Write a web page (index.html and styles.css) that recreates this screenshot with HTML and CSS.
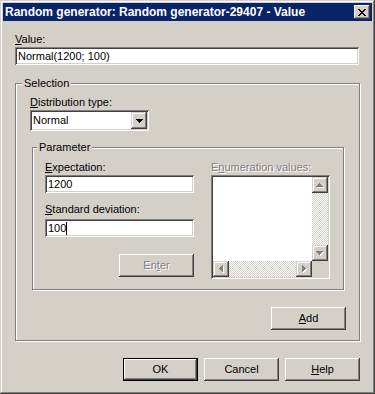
FILE: index.html
```html
<!DOCTYPE html>
<html lang="en">
<head>
    <meta charset="utf-8">
    <title>Random generator: Random generator-29407 - Value</title>
    <link rel="stylesheet" href="styles.css">
</head>
<body>
<div class="window">
    <div class="titlebar">
        <span class="title">Random generator: Random generator-29407 - Value</span>
        <span class="close">
            <svg width="8" height="7" viewBox="0 0 8 7"><path fill="#000" d="M0 0h2v1h-2z M6 0h2v1h-2z M1 1h2v1h-2z M5 1h2v1h-2z M2 2h4v1h-4z M3 3h2v1h-2z M2 4h4v1h-4z M1 5h2v1h-2z M5 5h2v1h-2z M0 6h2v1h-2z M6 6h2v1h-2z"/></svg>
        </span>
    </div>

    <div class="content">
        <div class="label"><u>V</u>alue:</div>
        <div class="edit value-edit">Normal(1200; 100)</div>

        <!-- group box: Selection -->
        <div class="group selection">
            <span class="legend">Selection</span>
            <div class="label"><u>D</u>istribution type:</div>
            <div class="combo">
                <span class="combo-text">Normal</span>
                <span class="combo-btn">
                    <svg width="7" height="4" viewBox="0 0 7 4"><path fill="#000" d="M0 0h7v1h-7z M1 1h5v1h-5z M2 2h3v1h-3z M3 3h1v1h-1z"/></svg>
                </span>
            </div>

            <!-- group box: Parameter -->
            <div class="group parameter">
                <span class="legend">Parameter</span>
                <div class="param-row">
                    <div class="param-left">
                        <div class="label"><u>E</u>xpectation:</div>
                        <div class="edit">1200</div>
                        <div class="label std-label"><u>S</u>tandard deviation:</div>
                        <div class="edit">100<span class="caret"></span></div>
                        <div class="btn disabled enter-btn">En<u>t</u>er</div>
                    </div>
                    <div class="param-right">
                        <div class="label disabled"><span>E<u>n</u>umeration values:</span></div>
                        <div class="listbox">
                            <div class="list-area"></div>
                            <div class="vscroll">
                                <span class="sbtn">
                                    <svg width="8" height="5" viewBox="0 0 8 5"><path fill="#fff" d="M4 1h1v1h-1z M3 2h3v1h-3z M2 3h5v1h-5z M1 4h7v1h-7z"/><path fill="#808080" d="M3 0h1v1h-1z M2 1h3v1h-3z M1 2h5v1h-5z M0 3h7v1h-7z"/></svg>
                                </span>
                                <span class="track"></span>
                                <span class="sbtn">
                                    <svg width="8" height="5" viewBox="0 0 8 5"><path fill="#fff" d="M1 1h7v1h-7z M2 2h5v1h-5z M3 3h3v1h-3z M4 4h1v1h-1z"/><path fill="#808080" d="M0 0h7v1h-7z M1 1h5v1h-5z M2 2h3v1h-3z M3 3h1v1h-1z"/></svg>
                                </span>
                            </div>
                            <div class="hscroll">
                                <span class="sbtn">
                                    <svg width="5" height="8" viewBox="0 0 5 8"><path fill="#fff" d="M4 1h1v7h-1z M3 2h1v5h-1z M2 3h1v3h-1z M1 4h1v1h-1z"/><path fill="#808080" d="M3 0h1v7h-1z M2 1h1v5h-1z M1 2h1v3h-1z M0 3h1v1h-1z"/></svg>
                                </span>
                                <span class="track"></span>
                                <span class="sbtn">
                                    <svg width="5" height="8" viewBox="0 0 5 8"><path fill="#fff" d="M1 1h1v7h-1z M2 2h1v5h-1z M3 3h1v3h-1z M4 4h1v1h-1z"/><path fill="#808080" d="M0 0h1v7h-1z M1 1h1v5h-1z M2 2h1v3h-1z M3 3h1v1h-1z"/></svg>
                                </span>
                            </div>
                            <div class="corner"></div>
                        </div>
                    </div>
                </div>
            </div>

            <div class="add-row">
                <div class="btn"><u>A</u>dd</div>
            </div>
        </div>

        <div class="footer">
            <div class="btn default">OK</div>
            <div class="btn">Cancel</div>
            <div class="btn"><u>H</u>elp</div>
        </div>
    </div>
</div>
</body>
</html>
```

FILE: styles.css
```css
html, body {
    margin: 0;
    padding: 0;
}

body {
    background-color: #d4d0c8;
    font-family: "Liberation Sans", Arial, sans-serif;
    font-size: 11px;
    color: #000;
    overflow: hidden;
}

u {
    text-decoration-thickness: 1px;
    text-underline-offset: 1px;
}

.window {
    width: 375px;
    height: 394px;
    box-sizing: border-box;
    padding: 3px;
    background: #d4d0c8;
    box-shadow: inset -1px -1px #404040, inset 1px 1px #d4d0c8, inset -2px -2px #808080, inset 2px 2px #fff;
}

.titlebar {
    height: 18px;
    background: #0a246a;
    color: white;
    display: flex;
    align-items: center;
    justify-content: space-between;
    padding: 0 2px;
}

.title {
    font-weight: bold;
    font-size: 12px;
    white-space: nowrap;
}

.close {
    width: 16px;
    height: 14px;
    background: #d4d0c8;
    display: flex;
    align-items: center;
    justify-content: center;
    box-shadow: inset -1px -1px #404040, inset 1px 1px #fff, inset -2px -2px #808080, inset 2px 2px #d4d0c8;
}

.content {
    padding: 12px 0 0 12px;
}

.label {
    height: 13px;
    line-height: 13px;
    margin-bottom: 1px;
    white-space: nowrap;
}

.label.disabled {
    color: #808080;
    text-shadow: 1px 1px 0 #fff;
}

.edit {
    box-sizing: border-box;
    height: 18px;
    padding: 3px 3px 0;
    line-height: 13px;
    background: #fff;
    white-space: nowrap;
    box-shadow: inset 1px 1px #808080, inset -1px -1px #fff, inset 2px 2px #404040, inset -2px -2px #d4d0c8;
}

.value-edit {
    width: 344px;
}

.caret {
    display: inline-block;
    width: 1px;
    height: 13px;
    background: #000;
    vertical-align: top;
}

/* group boxes */
.group {
    position: relative;
    box-sizing: border-box;
    border: 1px solid #808080;
    box-shadow: inset 1px 1px #fff, 1px 1px #fff;
}

.legend {
    position: absolute;
    top: -7px;
    left: 6px;
    padding: 0 2px;
    line-height: 13px;
    background: #d4d0c8;
}

.selection {
    width: 345px;
    margin-top: 18px;
    padding: 12px 13px 10px 14px;
}

.parameter {
    width: 312px;
    margin: 16px 0 0 2px;
    padding: 13px 12px 10px 12px;
}

.parameter .legend {
    left: 4px;
}

.combo {
    width: 119px;
    height: 21px;
    box-sizing: border-box;
    padding: 2px;
    display: flex;
    background: #fff;
    box-shadow: inset 1px 1px #808080, inset -1px -1px #fff, inset 2px 2px #404040, inset -2px -2px #d4d0c8;
}

.combo-text {
    flex: 1;
    padding-left: 1px;
    line-height: 17px;
}

.combo-btn {
    width: 16px;
    height: 17px;
    background: #d4d0c8;
    display: flex;
    align-items: center;
    justify-content: center;
    box-shadow: inset -1px -1px #404040, inset 1px 1px #d4d0c8, inset -2px -2px #808080, inset 2px 2px #fff;
}

.param-row {
    display: flex;
    gap: 17px;
    align-items: flex-start;
}

.param-left {
    width: 149px;
    display: flex;
    flex-direction: column;
}

.std-label {
    margin-top: 10px;
    margin-bottom: 3px;
}

.enter-btn {
    margin-top: 17px;
    align-self: flex-end;
}

.param-right {
    width: 119px;
}

/* list box with its two scroll bars */
.listbox {
    height: 104px;
    box-sizing: border-box;
    padding: 2px;
    background: #fff;
    display: grid;
    grid-template-columns: 1fr 16px;
    grid-template-rows: 1fr 16px;
    box-shadow: inset 1px 1px #808080, inset -1px -1px #fff, inset 2px 2px #404040, inset -2px -2px #d4d0c8;
}

.vscroll {
    display: flex;
    flex-direction: column;
}

.hscroll {
    display: flex;
}

.track {
    flex: 1;
    background: repeating-conic-gradient(#fff 0 25%, #d4d0c8 0 50%) 0 0 / 2px 2px;
}

.sbtn {
    width: 16px;
    height: 16px;
    flex: none;
    background: #d4d0c8;
    display: flex;
    align-items: center;
    justify-content: center;
    box-shadow: inset -1px -1px #404040, inset 1px 1px #d4d0c8, inset -2px -2px #808080, inset 2px 2px #fff;
}

.corner {
    background: #d4d0c8;
}

/* push buttons */
.btn {
    width: 75px;
    height: 23px;
    box-sizing: border-box;
    display: flex;
    align-items: center;
    justify-content: center;
    line-height: 13px;
    background: #d4d0c8;
    box-shadow: inset -1px -1px #404040, inset 1px 1px #fff, inset -2px -2px #808080, inset 2px 2px #d4d0c8;
}

.btn.default {
    border: 1px solid #000;
}

.btn.disabled {
    color: #808080;
    text-shadow: 1px 1px 0 #fff;
}

.add-row {
    display: flex;
    justify-content: flex-end;
    margin-top: 17px;
}

.footer {
    width: 345px;
    display: flex;
    justify-content: flex-end;
    gap: 6px;
    margin-top: 17px;
}
```
